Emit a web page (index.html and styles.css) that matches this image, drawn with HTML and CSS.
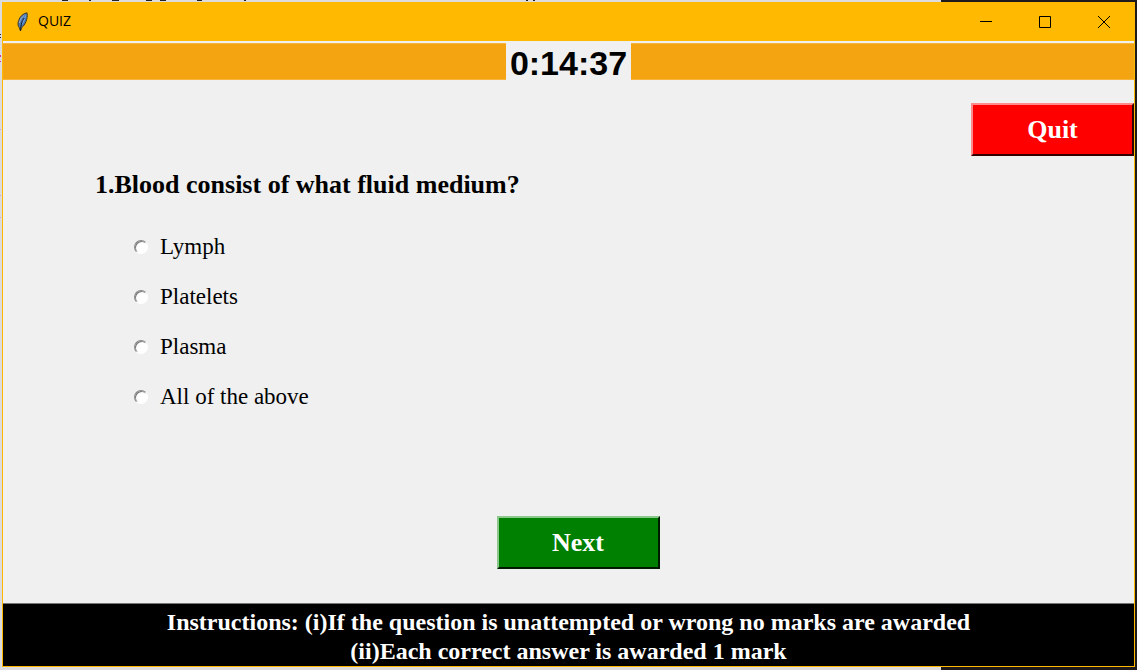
FILE: index.html
```
<!DOCTYPE html>
<html lang="en">
<head>
<meta charset="utf-8">
<title>QUIZ</title>
<link rel="stylesheet" href="styles.css">
</head>
<body>
<svg class="backdrop-marks" width="560" height="220" aria-hidden="true">
  <g fill="#222">
    <path d="M62 0h6v1h-6zM89 0h2v1h-2zM112 0h7v1h-7zM146 0h6v1h-6zM160 0h6v1h-6zM197 0h5v1h-5zM244 0h2v1h-2zM526 0h2v1h-2zM533 0h2v1h-2zM0 34h1v1h-1zM0 37h1v1h-1z"/>
  </g>
  <path fill="#d5329a" d="M0 55h1v2h-1zM0 61h1v1h-1z"/>
  <path fill="#d9a0dc" d="M0 129h1v1h-1zM0 195h1v1h-1zM0 217h1v1h-1z"/>
</svg>
<div class="window">
  <header class="titlebar">
    <svg class="feather" width="12" height="20" viewBox="0 0 12 20" aria-hidden="true">
      <path d="M10 .8C6 1.400 3 4.500 1.600 8.500C.6 11.500 .8 14 2.200 15.500L3.500 19L4.500 15.700C7 14 9 10.500 9.800 7C10.300 5 10.500 2.500 10 .8Z" fill="#4878b4" stroke="#4a3d20" stroke-width="1"/>
      <path d="M9.200 2.500C7 5 5.500 8.500 4.800 13C7 11 9 6 9.200 2.500Z" fill="#6ba4ea"/>
      <path d="M7.300 3.300C4.800 5 3 8 2.400 11" fill="none" stroke="#a5b4c4"/>
      <path d="M7.300 6C5 9 4 12 3.500 18.500" fill="none" stroke="#151b26"/>
    </svg>
    <h1 class="title">QUIZ</h1>
    <div class="controls">
      <button class="control" type="button" aria-label="Minimize"><svg width="12" height="12" viewBox="0 0 12 12"><path d="M0 5.500H12"/></svg></button>
      <button class="control" type="button" aria-label="Maximize"><svg width="12" height="12" viewBox="0 0 12 12"><path d="M.5 .5H11.500V11.500H.5Z"/></svg></button>
      <button class="control" type="button" aria-label="Close"><svg width="12" height="12" viewBox="0 0 12 12"><path d="M0 0L12 12M12 0L0 12"/></svg></button>
    </div>
  </header>
  <div class="timer-bar"><time class="timer">0:14:37</time></div>
  <main class="content">
    <button class="button quit" type="button">Quit</button>
    <form class="quiz">
      <fieldset class="question">
        <legend class="prompt">1.Blood consist of what fluid medium?</legend>
        <div class="options">
          <label class="option"><input class="radio" type="radio" name="answer">Lymph</label>
          <label class="option"><input class="radio" type="radio" name="answer">Platelets</label>
          <label class="option"><input class="radio" type="radio" name="answer">Plasma</label>
          <label class="option"><input class="radio" type="radio" name="answer">All of the above</label>
        </div>
      </fieldset>
      <button class="button next" type="button">Next</button>
    </form>
  </main>
  <footer class="instructions">
    <p class="line">Instructions: (i)If the question is unattempted or wrong no marks are awarded</p>
    <p class="line">(ii)Each correct answer is awarded 1 mark</p>
  </footer>
</div>
</body>
</html>
```
FILE: styles.css
```
* { box-sizing: border-box; }

body {
  margin: 0;
  min-height: 100vh;
  padding: 2px 2px 3px;
  display: flex;
  background: linear-gradient(90deg, #dcdcdf 941px, #1d191c 941px);
  font-family: "Liberation Serif", "Times New Roman", serif;
  color: #000;
}

.backdrop-marks {
  position: absolute;
  top: 0;
  left: 0;
}

.window {
  position: relative;
  flex: 1;
  display: flex;
  flex-direction: column;
  border: 1px solid #ffb900;
  border-top: 0;
  background: #f0f0f0;
}

.titlebar {
  display: flex;
  align-items: center;
  height: 39px;
  padding-left: 14px;
  background: #ffb900;
}

.title {
  margin: 0 0 0 9px;
  padding-bottom: 2px;
  font: 400 14px/20px "Open Sans", "Noto Sans", sans-serif;
}

.controls {
  display: flex;
  align-self: stretch;
  margin-left: auto;
  padding-right: 1px;
}

.control {
  display: flex;
  align-items: center;
  justify-content: center;
  width: 59px;
  padding: 0;
  border: 0;
  background: none;
}

.control svg {
  fill: none;
  stroke: #000;
  overflow: visible;
}

.timer-bar {
  display: flex;
  justify-content: center;
  margin-top: 2px;
  background: #f4a311;
  border: 1px solid #f6b43d;
  border-width: 1px 0;
}

.timer {
  margin: -1px 0;
  padding: 3px 4px 0;
  background: #f0f0f0;
  font: 700 34px/34px "Liberation Sans", Arial, sans-serif;
}

.content {
  flex: 1;
  display: flex;
  flex-direction: column;
  padding-top: 23px;
}

.button {
  width: 163px;
  height: 53px;
  padding: 0;
  border: 2px solid;
  color: #fff;
  font: 700 26px/30px "Liberation Serif", "Times New Roman", serif;
}

.quit {
  align-self: flex-end;
  background: #f00;
  border-color: #ff8b8b #300 #300 #ff8b8b;
}

.quiz {
  flex: 1;
  display: flex;
  flex-direction: column;
  padding: 14px 0 34px;
}

.question {
  min-width: 0;
  margin: 0 0 0 92px;
  padding: 0;
  border: 0;
}

.prompt {
  padding: 0;
  font-size: 26px;
  font-weight: 700;
  line-height: 30px;
}

.options {
  display: grid;
  gap: 20px;
  justify-items: start;
  padding: 32px 0 0 39px;
}

.option {
  display: flex;
  align-items: center;
  font-size: 23px;
  line-height: 30px;
}

.radio {
  appearance: none;
  width: 14px;
  height: 14px;
  margin: 0 12px 0 0;
  border: 1px solid;
  border-color: #888 #fff #fff #888;
  border-radius: 50%;
  background: #fff;
  box-shadow: inset 1px 1px 0 #777;
}

.radio:checked {
  background: radial-gradient(circle, #000 2px, #fff 3px);
}

.next {
  align-self: center;
  margin: auto 0 0 19px;
  background: #008000;
  border-color: #8cc78c #001a00 #001a00 #8cc78c;
}

.instructions {
  padding: 4px 0 0;
  border-top: 1px solid #777;
  background: #000;
  color: #fff;
  text-align: center;
}

.line {
  margin: 0;
  font-size: 24px;
  font-weight: 700;
  line-height: 29px;
}
```
